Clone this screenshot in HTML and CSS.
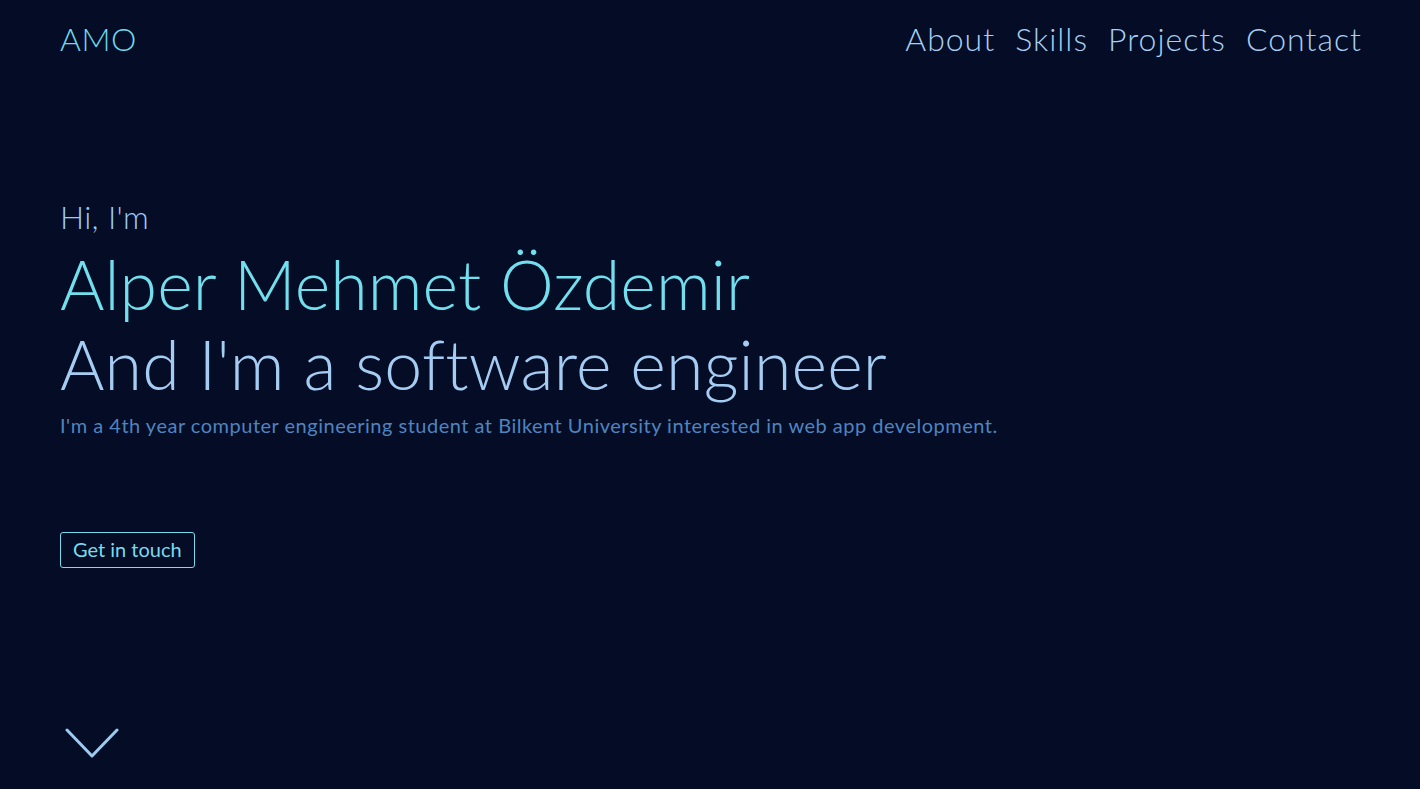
FILE: index.html
```html
<!DOCTYPE html>
<html lang="en">
<head>
<meta charset="utf-8">
<title>Alper Mehmet Özdemir</title>
<link rel="stylesheet" href="styles.css">
</head>
<body>
<header class="topbar">
  <a class="logo" href="#">AMO</a>
  <nav class="nav">
    <a href="#about">About</a>
    <a href="#skills">Skills</a>
    <a href="#projects">Projects</a>
    <a href="#contact">Contact</a>
  </nav>
</header>
<main class="hero">
  <p class="greet">Hi, I'm</p>
  <h1 class="name">Alper Mehmet Özdemir</h1>
  <h2 class="role">And I'm a software engineer</h2>
  <p class="intro">I'm a 4th year computer engineering student at Bilkent University interested in web app development.</p>
  <a class="cta" href="#contact">Get in touch</a>
  <a class="down" href="#about" aria-label="Scroll down">
    <svg width="54" height="32" viewBox="0 0 54 32" fill="none" stroke="#9ccbf2" stroke-width="3" stroke-linecap="round" stroke-linejoin="round"><path d="M2 2 L27 28 L52 2"/></svg>
  </a>
</main>
</body>
</html>
```
FILE: styles.css
```css
html, body {
  margin: 0;
  padding: 0;
  background: #050c25;
  font-family: "Lato", "Open Sans", sans-serif;
  height: 100%;
  overflow: hidden;
}
a { text-decoration: none; }

.topbar {
  display: flex;
  justify-content: space-between;
  align-items: center;
  padding: 17px 58px 0 60px;
  height: 42px;
}
.logo {
  color: #6fd9ee;
  font-size: 32px;
  font-weight: 300;
  letter-spacing: 0.5px;
}
.nav {
  display: flex;
  gap: 20px;
}
.nav a {
  color: #a6cff3;
  font-size: 32px;
  font-weight: 300;
  letter-spacing: 1px;
}

.hero {
  padding: 0 0 0 60px;
  display: flex;
  flex-direction: column;
  align-items: flex-start;
}
.greet {
  margin: 139px 0 0;
  color: #9ccbf4;
  font-size: 32px;
  font-weight: 300;
  line-height: 1.2;
  letter-spacing: 0.3px;
}
.name {
  margin: 8px 0 0;
  color: #72dfee;
  font-size: 68px;
  font-weight: 300;
  line-height: 80px;
  letter-spacing: 0.1px;
}
.role {
  margin: 0;
  color: #a5ccf2;
  font-size: 68px;
  font-weight: 300;
  line-height: 80px;
  letter-spacing: 0.2px;
}
.intro {
  margin: 8px 0 0;
  color: #4f84c0;
  font-size: 20px;
  line-height: 26px;
  letter-spacing: 0.5px;
}
.cta {
  margin-top: 94px;
  color: #79dbef;
  border: 1px solid #79dbef;
  border-radius: 3px;
  padding: 5px 12px 6px;
  font-size: 20px;
  line-height: 23px;
}
.down {
  margin-top: 160px;
  margin-left: 5px;
  display: block;
  line-height: 0;
}
```
